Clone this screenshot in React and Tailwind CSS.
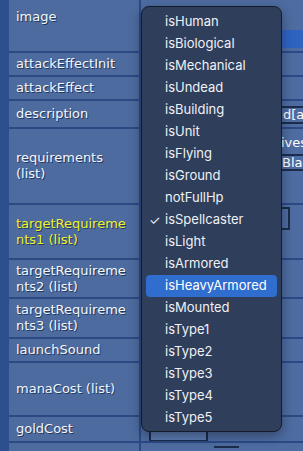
import React from 'react';

const rows = [
  { label: 'image', h: 'h-[51px]', top: true },
  { label: 'attackEffectInit', h: 'h-[22px]' },
  { label: 'attackEffect', h: 'h-[22px]' },
  { label: 'description', h: 'h-[26px]' },
  { label: ['requirements', '(list)'], h: 'h-[74px]' },
  { label: ['targetRequireme', 'nts1 (list)'], h: 'h-[53px]', active: true },
  { label: ['targetRequireme', 'nts2 (list)'], h: 'h-[37px]' },
  { label: ['targetRequireme', 'nts3 (list)'], h: 'h-[38px]' },
  { label: 'launchSound', h: 'h-[22px]' },
  { label: 'manaCost (list)', h: 'h-[52px]' },
  { label: 'goldCost', h: 'h-[24px]' },
  { label: '', h: 'h-[20px]' },
];

const options = [
  'isHuman', 'isBiological', 'isMechanical', 'isUndead', 'isBuilding', 'isUnit',
  'isFlying', 'isGround', 'notFullHp', 'isSpellcaster', 'isLight', 'isArmored',
  'isHeavyArmored', 'isMounted', 'isType1', 'isType2', 'isType3', 'isType4', 'isType5',
];

const ValueCell = ({ index }) => {
  // only the strip right of the open menu shows, so keep these rough
  if (index === 0) {
    return <div className="mt-[30px] h-[18px] bg-[#2f63c2]" />;
  }
  if (index === 3) {
    return (
      <div className="mt-[5px] ml-[5px] h-[18px] border-y-2 border-[#1c2c4a] overflow-hidden whitespace-nowrap text-[13px] leading-[14px] text-white pl-[137px]">
        d[ability]
      </div>
    );
  }
  if (index === 4) {
    return (
      <div className="flex flex-col pt-[7px] text-[13px] leading-[14px] text-white">
        <div className="pl-[140px] whitespace-nowrap overflow-hidden">ives</div>
        <div className="mt-[4px] ml-[5px] h-[17px] border-y-2 border-[#1c2c4a] pl-[136px] whitespace-nowrap overflow-hidden">Black</div>
      </div>
    );
  }
  if (index === 5) {
    return <div className="mt-[2px] ml-[9px] w-[140px] h-[23px] border-2 border-[#1c2c4a]" />;
  }
  if (index === 10) {
    return <div className="mt-[3px] ml-[8px] w-[59px] h-[22px] border-2 border-[#1c2c4a] bg-[#5a7bb2]" />;
  }
  if (index === 11) {
    return <div className="mt-[3px] ml-[73px] w-[25px] h-[8px] border-t-2 border-[#1c2c4a]" />;
  }
  return null;
};

export default function App() {
  return (
    <div className="relative w-[303px] h-[451px] overflow-hidden bg-[#2d4f8d] flex font-['DejaVu_Sans',sans-serif]">
      <div className="w-[9px] shrink-0" />
      <div className="flex-1 grid grid-cols-[130px_1fr] gap-[2px] bg-[#2b4a85] content-start">
        {rows.map((row, i) => (
          <React.Fragment key={i}>
            <div
              className={`${row.h} bg-[#4d6b9f] pl-[7px] flex ${row.top ? 'items-start pt-[9px]' : 'items-center'} text-[13px] leading-[16px] [text-shadow:1px_1px_0_#22395f] ${row.active ? 'text-[#f2f22a]' : 'text-[#f4f6fa]'}`}
            >
              <div>
                {Array.isArray(row.label)
                  ? row.label.map((l) => <div key={l}>{l}</div>)
                  : row.label}
              </div>
            </div>
            <div className={`${row.h} bg-[#4e6ca1] overflow-hidden`}>
              <ValueCell index={i} />
            </div>
          </React.Fragment>
        ))}
      </div>

      {/* open select menu */}
      <div className="absolute left-[141px] top-[6px] w-[141px] rounded-[8px] border border-[#141c2a] bg-[#2e3e5b] pt-[4px] pb-[2px] shadow-[0_4px_12px_rgba(0,0,0,0.35)] font-['Inter',sans-serif] text-[13px] text-[#eef1f6]">
        {options.map((o) => (
          <div
            key={o}
            className={`mx-[4px] h-[22px] flex items-center rounded-[4px] ${o === 'isHeavyArmored' ? 'bg-[#2f6dcf] text-white' : ''}`}
          >
            <span className="w-[19px] pl-[3px] text-[13px] leading-none">
              {o === 'isSpellcaster' ? '✓' : ''}
            </span>
            <span>{o}</span>
          </div>
        ))}
      </div>
    </div>
  );
}
